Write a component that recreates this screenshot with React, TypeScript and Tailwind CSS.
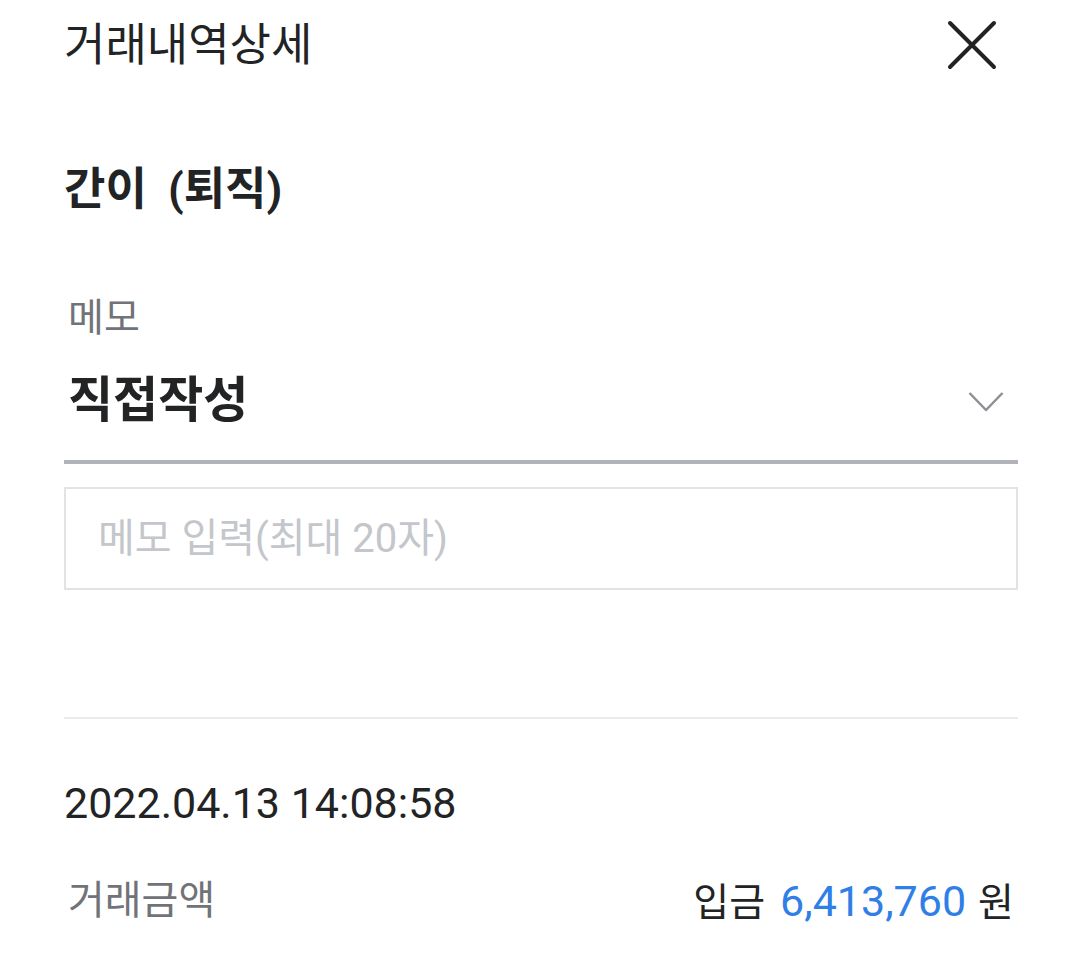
const font = { fontFamily: 'Roboto, "Noto Sans CJK KR", sans-serif' };

function CloseIcon() {
  return (
    <svg width="50" height="50" viewBox="0 0 50 50" className="text-[#222325]">
      <path d="M3 3 L47 47 M47 3 L3 47" stroke="currentColor" strokeWidth="4" strokeLinecap="round" fill="none" />
    </svg>
  );
}

function Chevron() {
  return (
    <svg width="36" height="22" viewBox="0 0 36 22" className="text-[#8c8f94]">
      <path d="M1.5 2 L18 19 L34.5 2" stroke="currentColor" strokeWidth="2.5" fill="none" strokeLinejoin="round" />
    </svg>
  );
}

export default function App() {
  return (
    <div className="w-[1080px] h-[960px] bg-white pl-16 pr-[62px] text-[#222325] overflow-hidden" style={font}>
      {/* Header */}
      <div className="flex items-center justify-between h-[90px]">
        <h1 className="text-[45px] font-normal leading-none">거래내역상세</h1>
        <div className="mr-[21px]">
          <CloseIcon />
        </div>
      </div>

      <div className="mt-[70px] h-[60px] leading-[60px] text-[45px] font-bold">
        간이 <span className="ml-[10px]">(퇴직)</span>
      </div>

      {/* Memo select */}
      <div className="mt-[73px] h-[50px] leading-[50px] text-[39px] text-[#707378] pl-[4px]">메모</div>
      <div className="mt-[27px] pb-[30px] border-b-4 border-[#b0b3b8]">
        <div className="flex items-center justify-between h-[60px] pl-[4px]">
          <span className="text-[49px] font-bold leading-none">직접작성</span>
          <div className="mr-[14px] mt-[4px]">
            <Chevron />
          </div>
        </div>
      </div>

      <div className="mt-[23px] h-[103px] border-2 border-[#e1e3e5] flex items-center pl-[32px]">
        <span className="text-[40px] text-[#c3c6ca]">메모 입력(최대 20자)</span>
      </div>

      <div className="mt-[127px] h-[2px] bg-[#e9ecee]" />

      {/* Details */}
      <div className="mt-[59px] h-[50px] leading-[50px] text-[43px]">2022.04.13 14:08:58</div>
      <div className="mt-[48px] flex items-center justify-between h-[50px]">
        <span className="text-[40px] text-[#707378] pl-[4px]">거래금액</span>
        <span className="flex items-baseline text-[43px] mr-[4px]">
          <span className="text-[39px]">입금</span>
          <span className="ml-[15px] text-[#2f7fe6]">6,413,760</span>
          <span className="ml-[12px] text-[39px]">원</span>
        </span>
      </div>
    </div>
  );
}
